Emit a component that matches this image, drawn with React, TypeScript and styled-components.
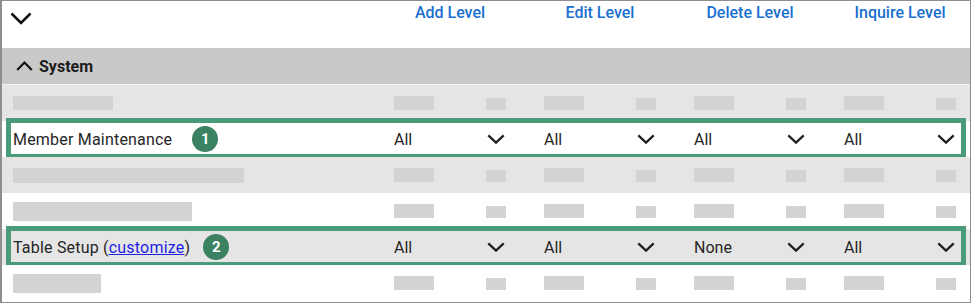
import styled, { createGlobalStyle } from 'styled-components'

const GlobalStyle = createGlobalStyle`
  body {
    margin: 0;
    background: #fff;
    font-family: Roboto, 'Liberation Sans', Arial, sans-serif;
  }
`

const COLS = 'grid-template-columns: 1fr repeat(3, 150px) 125px;'

const Frame = styled.div`
  box-sizing: border-box;
  width: 971px;
  height: 303px;
  border: 1px solid #8e8e8e;
  border-left-width: 2px;
  overflow: hidden;
  color: #262626;
`

const TopBar = styled.div`
  display: grid;
  ${COLS}
  height: 47px;
  box-sizing: border-box;
  padding: 2px 1px 0 11px;
  align-items: start;
`

const Toggle = styled.svg`
  margin: 9px 0 0 -3px;
  display: block;
`

const HeadLink = styled.a`
  width: 112px;
  text-align: center;
  font-size: 16px;
  font-weight: 500;
  line-height: 19px;
  color: #1a6fd0;
  text-decoration: none;
  cursor: pointer;
`

const Section = styled.div`
  display: flex;
  align-items: center;
  gap: 6px;
  height: 36px;
  padding-left: 14px;
  background: #c9c9c9;
  border-bottom: 1px solid #f3f3f3;
  font-size: 16px;
  font-weight: 700;
  color: #1c1c1c;
`

const Row = styled.div<{ $shade?: boolean }>`
  position: relative;
  display: grid;
  ${COLS}
  align-items: center;
  height: 36px;
  padding: 0 1px 0 11px;
  background: ${p => (p.$shade ? '#e5e5e5' : '#fff')};
  font-size: 16px;
`

const Highlight = styled.div`
  position: absolute;
  top: -3px;
  bottom: -2px;
  left: 4px;
  right: 4px;
  border: 5px solid #4a9b7a;
  pointer-events: none;
`

const Label = styled.div`
  display: flex;
  align-items: center;
  white-space: nowrap;
  letter-spacing: 0.2px;
`

const Customize = styled.a`
  color: #1f1fe4;
  text-decoration: underline;
  cursor: pointer;
`

const Badge = styled.span<{ $gap: number }>`
  display: inline-flex;
  align-items: center;
  justify-content: center;
  width: 26px;
  height: 26px;
  margin-left: ${p => p.$gap}px;
  border-radius: 50%;
  background: #3a8262;
  color: #fff;
  font-size: 15px;
  font-weight: 700;
  letter-spacing: 0;
`

const Select = styled.div`
  display: flex;
  align-items: center;
  justify-content: space-between;
  width: 112px;
`

const Caret = styled.svg`
  display: block;
  margin-right: 1px;
`

const Bar = styled.span<{ $w: number; $h: number; $drop?: number }>`
  display: block;
  width: ${p => p.$w}px;
  height: ${p => p.$h}px;
  margin-top: ${p => p.$drop || 0}px;
  background: #d3d3d3;
`

const ChevronDown = () => (
  <Toggle width="22" height="13" viewBox="0 0 22 13">
    <polyline points="1.5,1.5 11,11 20.5,1.5" fill="none" stroke="#111" strokeWidth="2.6" />
  </Toggle>
)

const ChevronUp = () => (
  <svg width="17" height="10" viewBox="0 0 17 10">
    <polyline points="1.2,9 8.5,1.6 15.8,9" fill="none" stroke="#111" strokeWidth="2.1" />
  </svg>
)

const Dropdown = ({ value }: { value: string }) => (
  <Select>
    <span>{value}</span>
    <Caret width="18" height="10" viewBox="0 0 18 10">
      <polyline points="1.3,1.3 9,8.6 16.7,1.3" fill="none" stroke="#1f1f1f" strokeWidth="2.3" />
    </Caret>
  </Select>
)

const Skeleton = () => (
  <Select>
    <Bar $w={40} $h={14} />
    <Bar $w={20} $h={12} $drop={2} />
  </Select>
)

type Line =
  | { kind: 'blank'; w: number; h: number }
  | { kind: 'data'; label: React.ReactNode; values: string[]; badge: number; gap: number }

const lines: Line[] = [
  { kind: 'blank', w: 100, h: 14 },
  { kind: 'data', label: 'Member Maintenance', values: ['All', 'All', 'All', 'All'], badge: 1, gap: 20 },
  { kind: 'blank', w: 231, h: 15 },
  { kind: 'blank', w: 179, h: 19 },
  {
    kind: 'data',
    label: (
      <>
        Table Setup (<Customize>customize</Customize>)
      </>
    ),
    values: ['All', 'All', 'None', 'All'],
    badge: 2,
    gap: 13,
  },
  { kind: 'blank', w: 88, h: 19 },
]

const headers = ['Add Level', 'Edit Level', 'Delete Level', 'Inquire Level']

export default function App() {
  return (
    <>
      <GlobalStyle />
      <Frame>
        <TopBar>
          <ChevronDown />
          {headers.map(h => (
            <HeadLink key={h}>{h}</HeadLink>
          ))}
        </TopBar>
        <Section>
          <ChevronUp />
          System
        </Section>
        {lines.map((line, i) => (
          <Row key={i} $shade={i % 2 === 0}>
            {line.kind === 'blank' ? (
              <>
                <Bar $w={line.w} $h={line.h} />
                <Skeleton />
                <Skeleton />
                <Skeleton />
                <Skeleton />
              </>
            ) : (
              <>
                <Label>
                  {line.label}
                  <Badge $gap={line.gap}>{line.badge}</Badge>
                </Label>
                {line.values.map((v, j) => (
                  <Dropdown key={j} value={v} />
                ))}
                <Highlight />
              </>
            )}
          </Row>
        ))}
      </Frame>
    </>
  )
}
